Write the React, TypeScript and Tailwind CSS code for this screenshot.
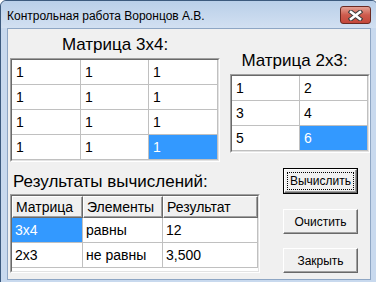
import React from "react"

type Cell = string

const m34: Cell[][] = [
  ["1", "1", "1"],
  ["1", "1", "1"],
  ["1", "1", "1"],
  ["1", "1", "1"],
]

const m23: Cell[][] = [
  ["1", "2"],
  ["3", "4"],
  ["5", "6"],
]

const results: Cell[][] = [
  ["3x4", "равны", "12"],
  ["2x3", "не равны", "3,500"],
]

const resCols = ["w-[71px]", "w-[80px]", "w-[95px]"]

function SunkenBox({ children, className = "" }: { children: React.ReactNode; className?: string }) {
  return (
    <div className={`border border-t-[#a0a0a0] border-l-[#a0a0a0] border-r-white border-b-white ${className}`}>
      <div className="h-full border border-t-[#696969] border-l-[#696969] border-r-[#e3e3e3] border-b-[#e3e3e3] bg-white">
        {children}
      </div>
    </div>
  )
}

function GridRows({ rows, cols, sel }: { rows: Cell[][]; cols: string[]; sel: [number, number] }) {
  return (
    <div className="flex flex-col">
      {rows.map((r, i) => (
        <div key={i} className="flex">
          {r.map((v, j) => {
            const active = sel[0] === i && sel[1] === j
            return (
              <div
                key={j}
                className={`${cols[j]} h-[25px] flex items-center pl-[4px] border-r border-b border-[#c0c0c0] text-[14px] ${
                  active ? "bg-[#3399ff] text-white" : "bg-white text-black"
                }`}
              >
                {v}
              </div>
            )
          })}
        </div>
      ))}
    </div>
  )
}

function Button({ label, isDefault = false }: { label: string; isDefault?: boolean }) {
  return (
    <div className={`w-[75px] text-[12px] text-black ${isDefault ? "h-[26px] border border-black" : "h-[25px]"}`}>
      <div className="w-full h-full p-[2px] bg-[#f0f0f0] border border-t-white border-l-white border-r-[#696969] border-b-[#696969] shadow-[inset_-1px_-1px_0_#a0a0a0]">
        <div
          className={`w-full h-full flex items-center justify-center border border-dotted ${
            isDefault ? "border-black" : "border-transparent"
          }`}
        >
          {label}
        </div>
      </div>
    </div>
  )
}

export default function App() {
  return (
    <div className="w-[376px] h-[282px] overflow-hidden bg-white font-['Liberation_Sans',Arial,sans-serif]">
      <div className="w-[378px] h-[286px] flex flex-col rounded-t-[6px] border border-[#3c5a7e] bg-[#c8d9ee]">
        {/* Title bar */}
        <div className="h-[27px] shrink-0 flex items-center justify-between pl-[6px] pr-[6px] rounded-t-[6px] bg-gradient-to-b from-[#b9cfe9] to-[#d2e0f1]">
          <span className="text-[12px] text-black leading-none mt-[2px]">Контрольная работа Воронцов А.В.</span>
          <div className="w-[31px] h-[18px] mt-[1px] rounded-[3px] border border-[#6b2a22] bg-gradient-to-b from-[#e3a195] via-[#cd5b4d] to-[#c4473a] flex items-center justify-center">
            <svg width="15" height="11" viewBox="0 0 15 11">
              <path d="M3 2 L12 9 M12 2 L3 9" stroke="#3b3b3b" strokeWidth="4.6" strokeLinecap="square" fill="none" />
              <path d="M3 2 L12 9 M12 2 L3 9" stroke="#ffffff" strokeWidth="2.6" strokeLinecap="square" fill="none" />
            </svg>
          </div>
        </div>

        {/* Client area */}
        <div className="mx-[6px] h-[252px] shrink-0 border border-[#8ea6c4] bg-[#f0f0f0] pl-[2px] pt-[6px] flex flex-col text-black">
          <div className="flex items-start">
            <div className="w-[210px] flex flex-col">
              <div className="h-[20px] leading-[20px] text-[17px] text-center">Матрица 3x4:</div>
              <SunkenBox className="mt-[3px] h-[104px]">
                <GridRows rows={m34} cols={["w-[69px]", "w-[68px]", "w-[69px]"]} sel={[3, 2]} />
              </SunkenBox>
            </div>
            <div className="ml-[10px] w-[140px] pt-[16px] flex flex-col">
              <div className="h-[20px] leading-[20px] text-[17px] text-center pr-[11px]">Матрица 2x3:</div>
              <SunkenBox className="mt-[3px] h-[79px]">
                <GridRows rows={m23} cols={["w-[68px]", "w-[68px]"]} sel={[2, 1]} />
              </SunkenBox>
            </div>
          </div>

          <div className="mt-[6px] flex items-start">
            <div className="w-[250px] pt-[4px] flex flex-col">
              <div className="h-[20px] leading-[20px] text-[17px] pl-[3px]">Результаты вычислений:</div>
              <SunkenBox className="mt-[2px] h-[79px]">
                <div className="flex h-[22px]">
                  {["Матрица", "Элементы", "Результат"].map((h, j) => (
                    <div
                      key={h}
                      className={`${resCols[j]} h-full flex items-center pl-[3px] text-[14px] bg-[#f0f0f0] border border-t-white border-l-white border-r-[#696969] border-b-[#696969] shadow-[inset_-1px_-1px_0_#a0a0a0]`}
                    >
                      {h}
                    </div>
                  ))}
                </div>
                {results.map((r, i) => (
                  <div key={i} className="flex">
                    {r.map((v, j) => {
                      const active = i === 0 && j === 0
                      return (
                        <div
                          key={j}
                          className={`${resCols[j]} h-[25px] flex items-center pl-[3px] border-r border-b border-[#c0c0c0] text-[14px] ${
                            active ? "bg-[#3399ff] text-white" : "bg-white"
                          }`}
                        >
                          {v}
                        </div>
                      )
                    })}
                  </div>
                ))}
              </SunkenBox>
            </div>
            <div className="ml-[23px] flex flex-col">
              <Button label="Вычислить" isDefault />
              <div className="mt-[15px]">
                <Button label="Очистить" />
              </div>
              <div className="mt-[14px]">
                <Button label="Закрыть" />
              </div>
            </div>
          </div>
        </div>
      </div>
    </div>
  )
}
